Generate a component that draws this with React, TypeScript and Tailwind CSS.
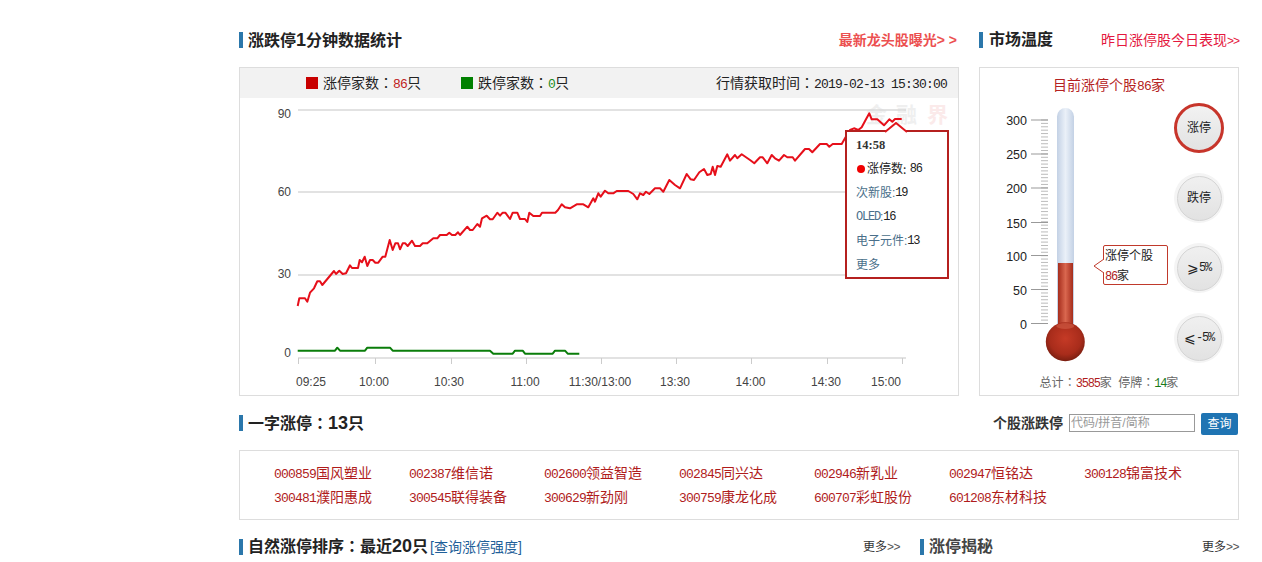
import React from "react";

const redLine =
  "297.7,306 299.3,298.3 305,298.3 307.3,301.7 310,292.7 314,288.3 317.3,281.3 320,281.3 322.3,285 334,271 336,274 339.3,270.7 342.7,274 346,273.3 350,265.3 352,268 358,268 359.7,260 362,262.3 364.7,256.7 367.3,266 370,260 372.7,260 375.3,262.7 378.3,262.7 382.7,256.7 385.3,256.7 389.7,240 392.7,250 395.3,243.3 398,243.3 400,249.3 402.7,243.3 405.3,243.3 407.7,246 412,240.7 415,246 420,246 422.7,243.3 427.3,243.3 433.3,238.3 437.3,238.3 440,235 446.7,235 449.3,232.7 452,235 455.3,235 458,232.3 460,235 467.3,226.7 470,230 472.7,230 477.3,224 480,226.7 482,218.3 486.7,215.7 490,219.3 492.7,219.3 497.3,212.7 500,215.7 502.7,212.7 505.3,212.7 510,219 512.7,212.7 517.3,212.7 520,219 525,219 527.3,222 529.3,212.7 533.3,216 540,216 542,212.7 555.3,212.7 558,210 561.7,204.3 565,207.3 570,208.3 576.7,204.3 583.3,204.3 588.3,207.3 593.3,198.3 595,201.7 598.3,193.3 600.7,196.7 605,190.7 608.3,193.3 613.3,193.3 616.7,191 628.3,191 633.3,194 637.3,199.3 640,193.3 643.3,195 646,191.7 649.3,194 655,188.3 660,188.3 663.3,191.7 669.3,180 675,185 680,188.3 686.7,174 690.7,179.3 694,180 699.3,172.3 704,169 707.3,175 710.7,174 712.7,166.7 715,175 717.3,166 720.7,166.7 727.3,154.3 730,160.7 735,155 737.3,158.3 741.7,154.3 750,160 754.3,163.3 760,157.3 762.7,157.3 767.3,163.3 771.7,155 775,158.3 779,160.7 784,155 787.3,157.3 792.7,157.3 795,160.7 805,149 809,149 812.3,152.3 820,144 826.7,144 829.3,146.7 832.7,144 841.7,144 845,138.3 850,130 854,128.3 858.3,130 861.7,127.3 866,119.3 869.3,113.3 871.7,119.3 877.3,119.3 884,125.3 889.3,119.3 892.3,121.7 895,119 901.7,119";

const greenLine =
  "297.7,350.7 335,350.7 337.3,347.7 340,350.7 365,350.7 367.3,347.7 390,347.7 392.7,350.7 490,350.7 493.3,353.7 512.7,353.7 515,350.7 522.7,350.7 525,353.7 552.7,353.7 555,350.7 565,350.7 567.7,353.7 579.3,353.7";

const yLabels = [
  { t: "90", y: 118 },
  { t: "60", y: 196 },
  { t: "30", y: 278 },
  { t: "0", y: 357 },
];
const gridY = [110, 192, 275];
const ticks = [298.5, 375.5, 451.5, 526.5, 601.5, 676.5, 751.5, 827.5, 902.5];
const xLabels = [
  { t: "09:25", x: 311 },
  { t: "10:00", x: 374 },
  { t: "10:30", x: 449 },
  { t: "11:00", x: 525 },
  { t: "11:30/13:00", x: 600 },
  { t: "13:30", x: 675 },
  { t: "14:00", x: 750.5 },
  { t: "14:30", x: 826 },
  { t: "15:00", x: 886 },
];

const stocks = [
  ["000859", "国风塑业"],
  ["002387", "维信诺"],
  ["002600", "领益智造"],
  ["002845", "同兴达"],
  ["002946", "新乳业"],
  ["002947", "恒铭达"],
  ["300128", "锦富技术"],
  ["300481", "濮阳惠成"],
  ["300545", "联得装备"],
  ["300629", "新劲刚"],
  ["300759", "康龙化成"],
  ["600707", "彩虹股份"],
  ["601208", "东材科技"],
];

const scaleMajor = [
  { t: "300", y: 120 },
  { t: "250", y: 154 },
  { t: "200", y: 188 },
  { t: "150", y: 222.5 },
  { t: "100", y: 255.5 },
  { t: "50", y: 289.5 },
  { t: "0", y: 323.5 },
];
const scaleMinor = Array.from({ length: 60 }, (_, i) => 120 + (i * 203.5) / 60);

// simsun-ish half width digits: 7px advance at 14px text, 6px at 12px text
function Num({ children, small, className = "" }: { children: React.ReactNode; small?: boolean; className?: string }) {
  const size = small ? "text-[12px] tracking-[-1.2px]" : "text-[13px] tracking-[-0.8px]";
  return <span className={`font-['Liberation_Mono',monospace] ${size} ${className}`}>{children}</span>;
}

function Colon() {
  return <span className="font-['Noto_Sans_CJK_TC',sans-serif]">：</span>;
}

function Digits({ children }: { children: React.ReactNode }) {
  return <span className="text-[18px]">{children}</span>;
}

function Heading({ children }: { children: React.ReactNode }) {
  return (
    <div className="flex items-center h-4 text-base leading-4 font-bold text-[#222]">
      <span className="w-1 h-4 bg-[#2b77ab] mr-[5px]" />
      <span className="whitespace-nowrap">{children}</span>
    </div>
  );
}

function More() {
  return <span className="text-xs leading-4 text-[#333]">更多<span className="text-[#555] tracking-[-0.5px]">&gt;&gt;</span></span>;
}

function Chart() {
  return (
    <svg viewBox="240 98 718 297" className="block w-[718px] h-[297px]">
      <text x="866" y="122" fontSize="21" letterSpacing="9" fontWeight="700" fill="#efefef" fontFamily="Noto Sans CJK SC">金融</text>
      <text x="927" y="122" fontSize="21" fontWeight="700" fill="#fbeaea" fontFamily="Noto Sans CJK SC">界</text>
      {gridY.map((y) => (
        <line key={y} x1="298" x2="906" y1={y} y2={y} stroke="#d9d9d9" strokeWidth="1.5" />
      ))}
      <line x1="298" x2="906" y1="358" y2="358" stroke="#d9d9d9" strokeWidth="1.5" />
      {ticks.map((x) => (
        <line key={x} x1={x} x2={x} y1="358" y2="364" stroke="#ccc" />
      ))}
      {yLabels.map((l) => (
        <text key={l.t} x="291" y={l.y} textAnchor="end" fontSize="12" fill="#444" fontFamily="Liberation Sans">{l.t}</text>
      ))}
      {xLabels.map((l) => (
        <text key={l.t} x={l.x} y="386" textAnchor="middle" fontSize="12" fill="#444" fontFamily="Liberation Sans">{l.t}</text>
      ))}
      <polyline points={redLine} fill="none" stroke="#e60f1a" strokeWidth="2" strokeLinejoin="round" />
      <polyline points={greenLine} fill="none" stroke="#0a7d0a" strokeWidth="2" strokeLinejoin="round" />
    </svg>
  );
}

function Thermometer() {
  return (
    <svg viewBox="1000 95 95 270" className="block w-[95px] h-[270px] ml-5 shrink-0">
      <defs>
        <linearGradient id="tube" x1="0" x2="1" y1="0" y2="0">
          <stop offset="0" stopColor="#c3d1e5" />
          <stop offset="0.5" stopColor="#eaf0f8" />
          <stop offset="1" stopColor="#c3d1e5" />
        </linearGradient>
        <linearGradient id="mercury" x1="0" x2="1" y1="0" y2="0">
          <stop offset="0" stopColor="#a52d1c" />
          <stop offset="0.5" stopColor="#d9674f" />
          <stop offset="1" stopColor="#a52d1c" />
        </linearGradient>
        <radialGradient id="bulb" cx="0.5" cy="0.42" r="0.58">
          <stop offset="0" stopColor="#c53a26" />
          <stop offset="0.7" stopColor="#a82c1b" />
          <stop offset="1" stopColor="#7a1e10" />
        </radialGradient>
      </defs>
      {scaleMinor.map((y) => (
        <line key={y} x1="1041" x2="1048" y1={y} y2={y} stroke="#bbb" />
      ))}
      {scaleMajor.map((m) => (
        <g key={m.t}>
          <line x1="1031" x2="1048" y1={m.y} y2={m.y} stroke="#999" />
          <text x="1027" y={m.y + 5} textAnchor="end" fontSize="12.5" fill="#222" fontFamily="Liberation Sans">{m.t}</text>
        </g>
      ))}
      <path d="M1057 330V116.5a8.5 8.5 0 0 1 17 0V330z" fill="url(#tube)" />
      <rect x="1058" y="263" width="15" height="70" fill="url(#mercury)" />
      <circle cx="1065.3" cy="341.7" r="19.5" fill="url(#bulb)" />
      <ellipse cx="1065.3" cy="326" rx="9" ry="3" fill="#d9674f" opacity="0.5" />
    </svg>
  );
}

function Dial({ label, active }: { label: React.ReactNode; active?: boolean }) {
  if (active) {
    return (
      <div className="w-[50px] h-[50px] rounded-full border-[3px] border-[#c7352b] bg-gradient-to-b from-[#f2f2f2] to-[#e2e2e2] flex items-center justify-center text-xs text-[#222]">
        {label}
      </div>
    );
  }
  return (
    <div className="w-[50px] h-[50px] rounded-full bg-[#f4f4f4] flex items-center justify-center">
      <div className="w-[45px] h-[45px] rounded-full border border-[#d4d4d4] bg-gradient-to-b from-[#f0f0f0] to-[#e2e2e2] flex items-center justify-center text-xs text-[#222]">
        {label}
      </div>
    </div>
  );
}

export default function App() {
  return (
    <main className="w-[1000px] ml-[239px] pt-8 flex flex-col gap-[19px] bg-white font-['Liberation_Sans','Noto_Sans_CJK_SC',sans-serif]">
      <section className="flex gap-5">
        <div className="w-[720px] flex flex-col gap-[19px]">
          <div className="h-4 flex items-center justify-between">
            <Heading>涨跌停<Digits>1</Digits>分钟数据统计</Heading>
            <span className="text-sm leading-4 font-bold text-[#ec5050] mr-[2px]">最新龙头股曝光&gt; &gt;</span>
          </div>
          <div className="relative h-[329px] border border-[#ddd]">
            <div className="h-[30px] bg-[#f2f2f2] flex items-center text-sm text-[#222]">
              <span className="w-3 h-3 bg-[#c80000] ml-[66px] mr-[5px]" />
              <span>涨停家数<Colon /><Num className="text-[#c02020]">86</Num>只</span>
              <span className="w-3 h-3 bg-[#008000] ml-10 mr-[5px]" />
              <span>跌停家数<Colon /><Num className="text-[#1a8a1a]">0</Num>只</span>
              <span className="ml-auto mr-[11px]">行情获取时间<Colon /><Num>2019-02-13 15:30:00</Num></span>
            </div>
            <Chart />
            <div className="absolute left-[605px] top-[62px] w-[104px] h-[149px] border-2 border-[#b5201f] bg-white pl-[9px] pt-px text-xs text-[#222]">
              <svg viewBox="0 0 22 11" className="absolute left-[38px] -top-[10px] w-[22px] h-[11px]">
                <polyline points="0,10 11,1 22,10" fill="white" stroke="#e0151c" strokeWidth="2" />
              </svg>
              <div className="h-6 flex items-center font-['Liberation_Serif',serif] font-bold text-[#333] text-[12.5px]">14:58</div>
              <div className="h-6 flex items-center">
                <span className="w-2 h-2 rounded-full bg-[#f00000] mr-[2px] ml-px" />涨停数<span className="font-['Noto_Sans_CJK_TC',sans-serif]">:</span>&nbsp;<Num small>86</Num>
              </div>
              <div className="h-6 flex items-center text-[#4a6f8a]">次新股:<Num small className="text-[#222]">19</Num></div>
              <div className="h-6 flex items-center text-[#4a6f8a]"><Num small>OLED</Num>:<Num small className="text-[#222]">16</Num></div>
              <div className="h-6 flex items-center text-[#4a6f8a]">电子元件:<Num small className="text-[#222]">13</Num></div>
              <div className="h-6 flex items-center text-[#4a6f8a]">更多</div>
            </div>
          </div>
        </div>

        <div className="w-[260px] flex flex-col gap-[19px]">
          <div className="h-4 flex items-center justify-between">
            <Heading><span className="ml-px">市场温度</span></Heading>
            <span className="text-sm leading-4 text-[#e4173e] whitespace-nowrap">昨日涨停股今日表现<span className="text-xs tracking-[-1px]">&gt;&gt;</span></span>
          </div>
          <div className="relative h-[329px] border border-[#ddd]">
            <div className="pt-[7px] h-[27px] text-sm leading-5 text-center text-[#b52222]">目前涨停个股<Num>86</Num>家</div>
            <div className="flex h-[270px]">
              <Thermometer />
              <div className="ml-auto mr-[14px] pt-2 flex flex-col gap-5">
                <Dial active label="涨停" />
                <Dial label="跌停" />
                <Dial label={<><span className="text-sm">⩾</span><Num small>5%</Num></>} />
                <Dial label={<><span className="text-sm">⩽</span><Num small>-5%</Num></>} />
              </div>
            </div>
            <div className="pt-[10px] text-xs leading-[14px] text-center text-[#666]">
              总计<Colon /><Num small className="text-[#b01c1c]">3585</Num>家&nbsp;&nbsp;停牌<Colon /><Num small className="text-[#1a7a1a]">14</Num>家
            </div>
            <div className="absolute left-[123px] top-[177px] w-[65px] h-[40px] border border-[#c0392b] rounded-[2px] bg-white text-xs leading-5 text-[#222]">
              <svg viewBox="0 0 11 14" className="absolute -left-[11px] top-[13px] w-[11px] h-[14px]">
                <polyline points="11,0 1,7 11,14" fill="white" stroke="#c0392b" />
              </svg>
              <div className="pl-px">涨停个股</div>
              <div className="pl-px"><Num small className="text-[#b01c1c]">86</Num>家</div>
            </div>
          </div>
        </div>
      </section>

      <section className="flex items-center justify-between h-4">
        <Heading>一字涨停<Colon /><Digits>13</Digits>只</Heading>
        <div className="flex items-center">
          <span className="text-sm font-bold text-[#333] mr-[6px]">个股涨跌停</span>
          <input
            placeholder="代码/拼音/简称"
            className="w-[126px] h-[18px] border border-[#999] px-px text-xs outline-none placeholder:text-[#999]"
          />
          <button className="w-[37px] h-[22px] ml-[6px] mr-px mt-px rounded-[2px] bg-[#1f74b3] text-white text-xs">查询</button>
        </div>
      </section>

      <section className="h-[70px] border border-[#ddd] pl-[34px] pt-[10px] grid grid-cols-[repeat(7,135px)] auto-rows-[24px] text-sm leading-6 text-[#b01c1c]">
        {stocks.map(([code, name]) => (
          <div key={code} className="whitespace-nowrap"><Num>{code}</Num>{name}</div>
        ))}
      </section>

      <section className="flex gap-5 h-4">
        <div className="w-[661px] flex items-center justify-between">
          <Heading>
            自然涨停排序<Colon />最近<Digits>20</Digits>只<span className="ml-[2px] text-sm font-normal text-[#1f5f99]">[查询涨停强度]</span>
          </Heading>
          <More />
        </div>
        <div className="flex-1 flex items-center justify-between">
          <Heading><span className="text-[#444]">涨停揭秘</span></Heading>
          <More />
        </div>
      </section>
    </main>
  );
}
